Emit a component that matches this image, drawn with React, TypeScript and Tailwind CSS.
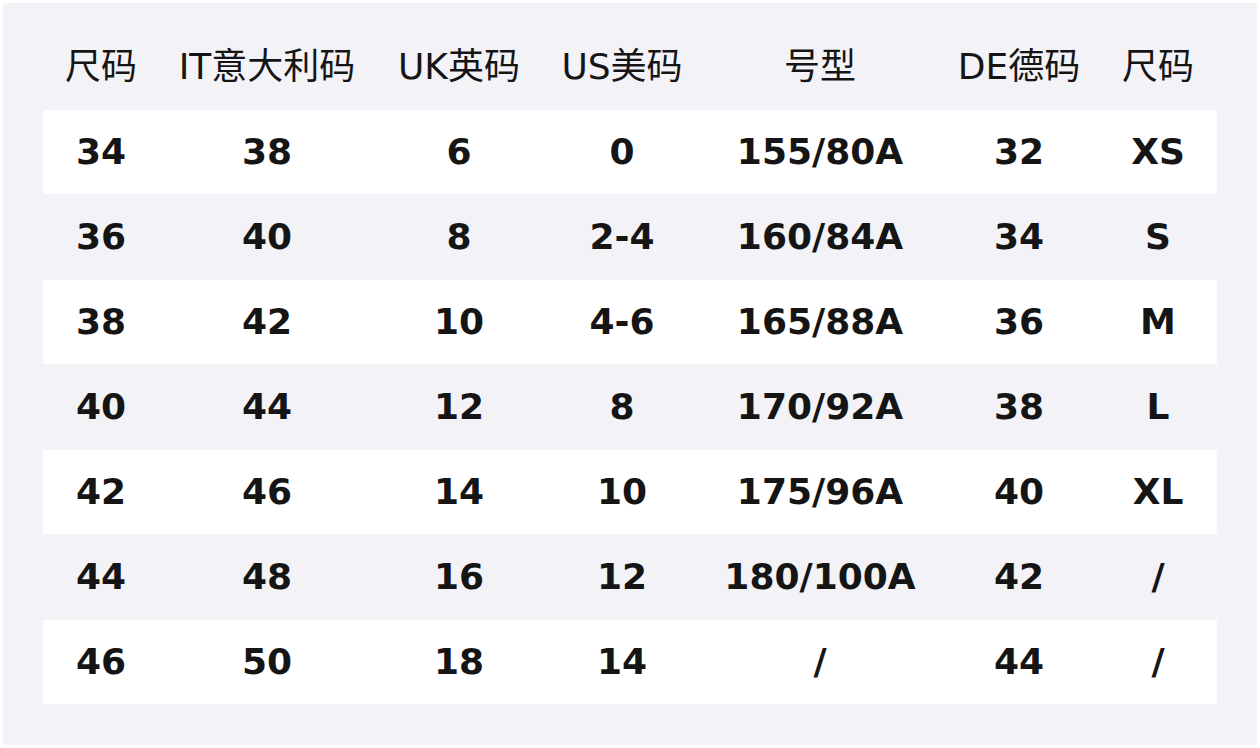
const headers = ['尺码', 'IT意大利码', 'UK英码', 'US美码', '号型', 'DE德码', '尺码']

const rows = [
  ['34', '38', '6', '0', '155/80A', '32', 'XS'],
  ['36', '40', '8', '2-4', '160/84A', '34', 'S'],
  ['38', '42', '10', '4-6', '165/88A', '36', 'M'],
  ['40', '44', '12', '8', '170/92A', '38', 'L'],
  ['42', '46', '14', '10', '175/96A', '40', 'XL'],
  ['44', '48', '16', '12', '180/100A', '42', '/'],
  ['46', '50', '18', '14', '/', '44', '/'],
]

const cols = 'grid grid-cols-[116px_216px_168px_158px_238px_160px_118px]'

export default function App() {
  return (
    <div className="min-h-[748px] w-[1260px] bg-white p-[3px] font-['DejaVu_Sans','Noto_Sans_CJK_SC',sans-serif] text-[#151515]">
      <div className="flex h-[742px] flex-col gap-px rounded-[3px] bg-[#f2f2f7] px-10 pt-[22px]">
        <div className={`${cols} h-[84px] items-center text-center text-[36px]`}>
          {headers.map((h, i) => (
            <div key={i}>{h}</div>
          ))}
        </div>
        {rows.map((row, r) => (
          <div
            key={r}
            className={`${cols} h-[84px] items-center rounded-[2px] text-center text-[36px] font-bold ${
              r % 2 === 0 ? 'bg-white' : ''
            }`}
          >
            {row.map((cell, i) => (
              <div key={i}>{cell}</div>
            ))}
          </div>
        ))}
      </div>
    </div>
  )
}
